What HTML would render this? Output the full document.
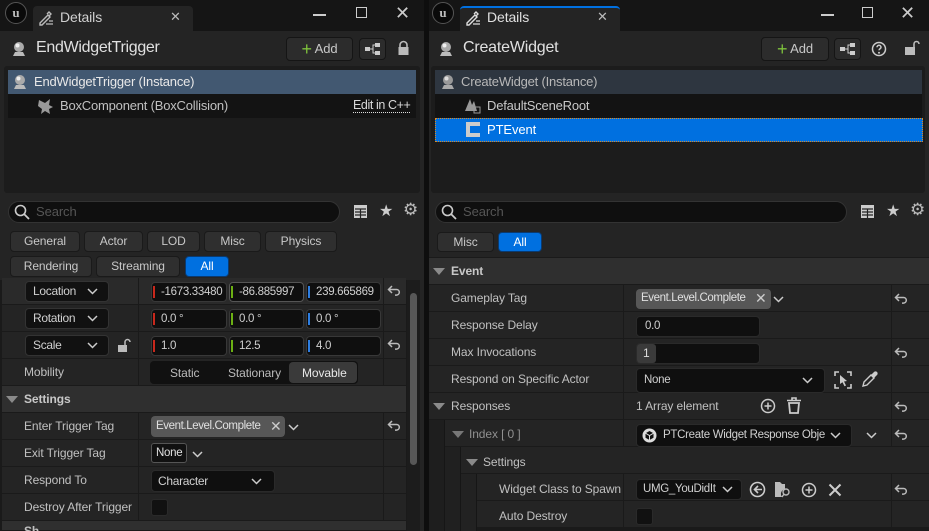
<!DOCTYPE html>
<html><head><meta charset="utf-8"><style>
*{margin:0;padding:0;box-sizing:border-box}
html{width:929px;height:531px;overflow:hidden}
body{width:929px;height:531px;background:#0e0e0e;overflow:hidden;position:relative;font-family:"Liberation Sans",sans-serif;font-size:12px;color:#c0c0c0;letter-spacing:-0.1px}
.a{position:absolute}
.t{position:absolute;white-space:nowrap}
.btn{position:absolute;background:#383838;border:1px solid #1a1a1a;border-radius:4px;color:#c8c8c8;text-align:center;font-size:12px}
.row{position:absolute;background:#242424;border-bottom:1px solid #1a1a1a}
.cat{position:absolute;background:#2f2f2f;border-bottom:1px solid #1a1a1a}
.fld{position:absolute;background:#0f0f0f;border:1px solid #383838;border-radius:4px;color:#d0d0d0;padding-left:6px;line-height:18px;overflow:hidden;white-space:nowrap;font-size:11.5px;letter-spacing:-0.3px}
.vl{position:absolute;width:1px;background:#1a1a1a}
.tri{position:absolute;width:0;height:0;border-left:6px solid transparent;border-right:6px solid transparent;border-top:7px solid #8a8a8a}
.chip{position:absolute;background:#575757;border-radius:4px;color:#e0e0e0;padding-left:5px;line-height:20px;font-size:11.5px;letter-spacing:-0.4px;white-space:nowrap;overflow:hidden}
</style></head><body>

<!-- ================= LEFT PANEL ================= -->
<div class="a" style="left:0;top:0;width:424px;height:531px;background:#242424"></div>
<div class="a" style="left:0;top:0;width:424px;height:31px;background:#151515"></div>
<div class="a" style="left:5px;top:2px;width:22px;height:22px;border-radius:50%;background:#0a0a0a;border:1px solid #555;color:#bbb;font:bold 13px 'Liberation Serif',serif;text-align:center;line-height:20px">u</div>
<div class="a" style="left:33px;top:6px;width:160px;height:25px;background:#242424;border-radius:4px 4px 0 0"></div>
<svg class="a" style="left:38px;top:10px" width="16" height="16"><path d="M2 13l8-8 2 2-8 8H2z M9 4l2-2 2 2-2 2" stroke="#bbb" fill="none" stroke-width="1.4"/><path d="M8 14h7M11 11h4" stroke="#bbb" stroke-width="1.2"/></svg>
<div class="t" style="left:60px;top:9px;font-size:14px;color:#d0d0d0">Details</div>
<div class="t" style="left:170px;top:9px;font-size:13px;color:#bbb">✕</div>
<div class="a" style="left:313px;top:14px;width:13px;height:1.5px;background:#ccc"></div>
<div class="a" style="left:356px;top:7px;width:11px;height:11px;border:1.5px solid #ccc"></div>
<div class="t" style="left:395px;top:3px;font-size:18px;color:#ccc">✕</div>

<svg class="a" style="left:10px;top:40px" width="18" height="18"><circle cx="9" cy="7" r="5" fill="#aaa"/><circle cx="7.5" cy="5.5" r="2" fill="#eee"/><path d="M3 16h12l-2-4H5z" fill="#bbb"/></svg>
<div class="t" style="left:36px;top:39px;font-size:16px;color:#e0e0e0;letter-spacing:-0.3px">EndWidgetTrigger</div>
<div class="btn" style="left:286px;top:37px;width:67px;height:24px;background:#2c2c2c;border-color:#151515;line-height:22px;font-size:13px"><span style="color:#7ec23c;font-size:18px;vertical-align:-2px">+</span> Add</div>
<div class="btn" style="left:359px;top:38px;width:27px;height:22px;background:#2c2c2c;border-color:#151515"></div>
<svg class="a" style="left:364px;top:43px" width="17" height="12"><rect x="1" y="4" width="5" height="4" fill="#ccc"/><rect x="11" y="0" width="5" height="4" fill="#ccc"/><rect x="11" y="8" width="5" height="4" fill="#ccc"/><path d="M6 6h3V2h2M9 6v4h2" stroke="#ccc" fill="none"/></svg>
<svg class="a" style="left:397px;top:40px" width="13" height="16"><path d="M3 7V5a3.5 3.5 0 017 0v2" stroke="#bbb" fill="none" stroke-width="1.6"/><rect x="1.5" y="7" width="10" height="8" fill="#bbb"/></svg>

<div class="a" style="left:4px;top:66px;width:416px;height:127px;background:#1c1c1c;border-radius:3px"></div>
<div class="a" style="left:8px;top:70px;width:408px;height:24px;background:#425871"></div>
<svg class="a" style="left:11px;top:73px" width="18" height="18"><circle cx="9" cy="7" r="5" fill="#aaa"/><circle cx="7.5" cy="5.5" r="2" fill="#eee"/><path d="M3 16h12l-2-4H5z" fill="#bbb"/></svg>
<div class="t" style="left:34px;top:74px;font-size:13px;color:#e8e8e8;letter-spacing:-0.2px">EndWidgetTrigger (Instance)</div>
<div class="a" style="left:8px;top:94px;width:408px;height:24px;background:#131313"></div>
<svg class="a" style="left:37px;top:97px" width="17" height="17"><path d="M2 3l6 3 5-4-1 6 4 2-4 2 1 5-5-3-4 3 1-5-4-3z" fill="#999"/></svg>
<div class="t" style="left:60px;top:98px;font-size:13px;color:#c0c0c0;letter-spacing:-0.2px">BoxComponent (BoxCollision)</div>
<div class="t" style="left:353px;top:98px;font-size:12.5px;color:#d8d8d8;border-bottom:1px dotted #ddd;line-height:14px;letter-spacing:-0.4px">Edit in C++</div>

<div class="a" style="left:8px;top:201px;width:332px;height:22px;background:#0f0f0f;border:1px solid #333;border-radius:11px"></div>
<svg class="a" style="left:14px;top:204px" width="16" height="16"><circle cx="6.5" cy="6.5" r="5" stroke="#ccc" fill="none" stroke-width="1.6"/><path d="M10 10l5 5" stroke="#ccc" stroke-width="1.8"/></svg>
<div class="t" style="left:36px;top:204px;font-size:13px;color:#555">Search</div>
<svg class="a" style="left:353px;top:204px" width="15" height="15"><rect x="1" y="1" width="13" height="13" fill="#ccc"/><path d="M2 5h11M2 8h11M2 11h11M7.5 5v9" stroke="#242424" stroke-width="1.2"/></svg>
<div class="t" style="left:379px;top:201px;font-size:16px;color:#ccc">★</div>
<div class="t" style="left:403px;top:200px;font-size:17px;color:#bbb">⚙</div>

<div class="btn" style="left:10px;top:231px;width:70px;height:21px;line-height:19px;background:#2f2f2f">General</div>
<div class="btn" style="left:84px;top:231px;width:59px;height:21px;line-height:19px;background:#2f2f2f">Actor</div>
<div class="btn" style="left:147px;top:231px;width:53px;height:21px;line-height:19px;background:#2f2f2f">LOD</div>
<div class="btn" style="left:204px;top:231px;width:57px;height:21px;line-height:19px;background:#2f2f2f">Misc</div>
<div class="btn" style="left:265px;top:231px;width:72px;height:21px;line-height:19px;background:#2f2f2f">Physics</div>
<div class="btn" style="left:10px;top:256px;width:82px;height:21px;line-height:19px;background:#2f2f2f">Rendering</div>
<div class="btn" style="left:96px;top:256px;width:84px;height:21px;line-height:19px;background:#2f2f2f">Streaming</div>
<div class="btn" style="left:185px;top:256px;width:44px;height:21px;line-height:19px;background:#0070e0;color:#fff;border-color:#0a3a70">All</div>

<div class="a" style="left:0;top:280px;width:407px;height:251px;background:#1a1a1a"></div>
<div class="row" style="left:2px;top:278px;width:404px;height:27px;background:#2a2a2a"></div>
<div class="row" style="left:2px;top:305px;width:404px;height:27px"></div>
<div class="row" style="left:2px;top:332px;width:404px;height:27px"></div>
<div class="row" style="left:2px;top:359px;width:404px;height:27px"></div>
<div class="cat" style="left:2px;top:386px;width:404px;height:27px"></div>
<div class="row" style="left:2px;top:413px;width:404px;height:27px"></div>
<div class="row" style="left:2px;top:440px;width:404px;height:27px"></div>
<div class="row" style="left:2px;top:467px;width:404px;height:27px"></div>
<div class="row" style="left:2px;top:494px;width:404px;height:27px"></div>
<div class="cat" style="left:2px;top:521px;width:404px;height:10px"></div>
<div class="vl" style="left:138px;top:278px;height:108px"></div>
<div class="vl" style="left:138px;top:413px;height:108px"></div>
<div class="vl" style="left:383px;top:278px;height:108px"></div>
<div class="vl" style="left:383px;top:413px;height:108px"></div>
<div class="a" style="left:407px;top:280px;width:13px;height:251px;background:#1c1c1c"></div>
<div class="a" style="left:410px;top:293px;width:7px;height:172px;background:#575757;border-radius:4px"></div>

<div class="fld" style="left:25px;top:281px;width:84px;height:21px;background:#111;border-color:#333;padding-left:7px;line-height:19px;font-size:12px">Location</div>
<div class="fld" style="left:25px;top:308px;width:84px;height:21px;background:#111;border-color:#333;padding-left:7px;line-height:19px;font-size:12px">Rotation</div>
<div class="fld" style="left:25px;top:335px;width:84px;height:21px;background:#111;border-color:#333;padding-left:7px;line-height:19px;font-size:12px">Scale</div>
<svg class="a" style="left:87px;top:288px" width="11" height="7"><path d="M1 1l4.5 4.5L10 1" stroke="#ccc" fill="none" stroke-width="1.5"/></svg>
<svg class="a" style="left:87px;top:315px" width="11" height="7"><path d="M1 1l4.5 4.5L10 1" stroke="#ccc" fill="none" stroke-width="1.5"/></svg>
<svg class="a" style="left:87px;top:342px" width="11" height="7"><path d="M1 1l4.5 4.5L10 1" stroke="#ccc" fill="none" stroke-width="1.5"/></svg>
<svg class="a" style="left:117px;top:338px" width="14" height="15"><path d="M8 7V4a2.5 2.5 0 015 0" stroke="#bbb" fill="none" stroke-width="1.5"/><rect x="1" y="7" width="9" height="7" fill="#bbb"/></svg>

<div class="fld" style="left:151px;top:282px;width:76px;height:20px;padding-left:9px">-1673.33480</div>
<div class="fld" style="left:229px;top:282px;width:75px;height:20px;padding-left:9px;border-color:#555">-86.885997</div>
<div class="fld" style="left:306px;top:282px;width:75px;height:20px;padding-left:9px">239.665869</div>
<div class="fld" style="left:151px;top:309px;width:76px;height:20px;padding-left:9px">0.0 °</div>
<div class="fld" style="left:229px;top:309px;width:75px;height:20px;padding-left:9px">0.0 °</div>
<div class="fld" style="left:306px;top:309px;width:75px;height:20px;padding-left:9px">0.0 °</div>
<div class="fld" style="left:151px;top:336px;width:76px;height:20px;padding-left:9px">1.0</div>
<div class="fld" style="left:229px;top:336px;width:75px;height:20px;padding-left:9px">12.5</div>
<div class="fld" style="left:306px;top:336px;width:75px;height:20px;padding-left:9px">4.0</div>
<div class="a" style="left:153px;top:286px;width:2px;height:12px;background:#c8281c"></div>
<div class="a" style="left:231px;top:286px;width:2px;height:12px;background:#6cb014"></div>
<div class="a" style="left:308px;top:286px;width:2px;height:12px;background:#2d7de0"></div>
<div class="a" style="left:153px;top:313px;width:2px;height:12px;background:#c8281c"></div>
<div class="a" style="left:231px;top:313px;width:2px;height:12px;background:#6cb014"></div>
<div class="a" style="left:308px;top:313px;width:2px;height:12px;background:#2d7de0"></div>
<div class="a" style="left:153px;top:340px;width:2px;height:12px;background:#c8281c"></div>
<div class="a" style="left:231px;top:340px;width:2px;height:12px;background:#6cb014"></div>
<div class="a" style="left:308px;top:340px;width:2px;height:12px;background:#2d7de0"></div>

<svg class="a" style="left:387px;top:285px" width="14" height="12"><path d="M5 1L1.5 4.5 5 8M2 4.5h7.5a2.8 2.8 0 010 5.6H8" stroke="#bbb" fill="none" stroke-width="1.5"/></svg>
<svg class="a" style="left:387px;top:339px" width="14" height="12"><path d="M5 1L1.5 4.5 5 8M2 4.5h7.5a2.8 2.8 0 010 5.6H8" stroke="#bbb" fill="none" stroke-width="1.5"/></svg>
<svg class="a" style="left:387px;top:420px" width="14" height="12"><path d="M5 1L1.5 4.5 5 8M2 4.5h7.5a2.8 2.8 0 010 5.6H8" stroke="#bbb" fill="none" stroke-width="1.5"/></svg>

<div class="t" style="left:24px;top:365px">Mobility</div>
<div class="a" style="left:150px;top:361px;width:208px;height:23px;background:#111;border-radius:4px"></div>
<div class="a" style="left:289px;top:362px;width:68px;height:21px;background:#3a3a3a;border-radius:4px"></div>
<div class="t" style="left:170px;top:366px;color:#bbb">Static</div>
<div class="t" style="left:228px;top:366px;color:#bbb">Stationary</div>
<div class="t" style="left:302px;top:366px;color:#e8e8e8">Movable</div>

<div class="tri" style="left:6px;top:396px"></div>
<div class="t" style="left:24px;top:392px;font-weight:bold;color:#c8c8c8">Settings</div>

<div class="t" style="left:24px;top:419px">Enter Trigger Tag</div>
<div class="chip" style="left:151px;top:416px;width:134px;height:21px">Event.Level.Complete</div>
<div class="a" style="left:266px;top:417px;width:18px;height:19px;background:#575757"></div>
<div class="t" style="left:270px;top:418px;font-size:14px;color:#ccc">✕</div>
<svg class="a" style="left:288px;top:424px" width="11" height="7"><path d="M1 1l4.5 4.5L10 1" stroke="#ccc" fill="none" stroke-width="1.5"/></svg>

<div class="t" style="left:24px;top:446px">Exit Trigger Tag</div>
<div class="a" style="left:151px;top:443px;width:36px;height:20px;border:1px solid #555;border-radius:3px;background:#111;color:#e0e0e0;padding-left:4px;line-height:18px;font-size:11.5px;letter-spacing:-0.3px">None</div>
<svg class="a" style="left:192px;top:451px" width="11" height="7"><path d="M1 1l4.5 4.5L10 1" stroke="#ccc" fill="none" stroke-width="1.5"/></svg>

<div class="t" style="left:24px;top:473px">Respond To</div>
<div class="fld" style="left:151px;top:470px;width:124px;height:22px;line-height:20px;border-color:#2a2a2a;font-size:12px">Character</div>
<svg class="a" style="left:251px;top:478px" width="11" height="7"><path d="M1 1l4.5 4.5L10 1" stroke="#ccc" fill="none" stroke-width="1.5"/></svg>

<div class="t" style="left:24px;top:500px">Destroy After Trigger</div>
<div class="a" style="left:151px;top:499px;width:17px;height:17px;background:#111;border:1px solid #2a2a2a;border-radius:3px"></div>
<div class="t" style="left:24px;top:524px;font-weight:bold;line-height:14px">Sh</div>

<!-- ================= RIGHT PANEL ================= -->
<div class="a" style="left:429px;top:0;width:500px;height:531px;background:#242424"></div>
<div class="a" style="left:429px;top:0;width:500px;height:31px;background:#151515"></div>
<div class="a" style="left:432px;top:2px;width:22px;height:22px;border-radius:50%;background:#0a0a0a;border:1px solid #555;color:#bbb;font:bold 13px 'Liberation Serif',serif;text-align:center;line-height:20px">u</div>
<div class="a" style="left:460px;top:6px;width:160px;height:25px;background:#242424;border-radius:4px 4px 0 0;border-top:2px solid #0070e0"></div>
<svg class="a" style="left:465px;top:10px" width="16" height="16"><path d="M2 13l8-8 2 2-8 8H2z M9 4l2-2 2 2-2 2" stroke="#ddd" fill="none" stroke-width="1.4"/><path d="M8 14h7M11 11h4" stroke="#ddd" stroke-width="1.2"/></svg>
<div class="t" style="left:487px;top:9px;font-size:14px;color:#e0e0e0">Details</div>
<div class="t" style="left:597px;top:9px;font-size:13px;color:#bbb">✕</div>
<div class="a" style="left:821px;top:14px;width:13px;height:1.5px;background:#ccc"></div>
<div class="a" style="left:862px;top:7px;width:11px;height:11px;border:1.5px solid #ccc"></div>
<div class="t" style="left:900px;top:3px;font-size:18px;color:#ccc">✕</div>

<svg class="a" style="left:437px;top:40px" width="18" height="18"><circle cx="9" cy="7" r="5" fill="#aaa"/><circle cx="7.5" cy="5.5" r="2" fill="#eee"/><path d="M3 16h12l-2-4H5z" fill="#bbb"/></svg>
<div class="t" style="left:463px;top:39px;font-size:16px;color:#e0e0e0;letter-spacing:-0.2px">CreateWidget</div>
<div class="btn" style="left:761px;top:37px;width:68px;height:24px;background:#2c2c2c;border-color:#151515;line-height:22px;font-size:13px"><span style="color:#7ec23c;font-size:18px;vertical-align:-2px">+</span> Add</div>
<div class="btn" style="left:834px;top:38px;width:27px;height:22px;background:#2c2c2c;border-color:#151515"></div>
<svg class="a" style="left:839px;top:43px" width="17" height="12"><rect x="1" y="4" width="5" height="4" fill="#ccc"/><rect x="11" y="0" width="5" height="4" fill="#ccc"/><rect x="11" y="8" width="5" height="4" fill="#ccc"/><path d="M6 6h3V2h2M9 6v4h2" stroke="#ccc" fill="none"/></svg>
<svg class="a" style="left:871px;top:41px" width="16" height="16"><circle cx="8" cy="8" r="6.5" stroke="#ccc" fill="none" stroke-width="1.5"/><path d="M6 6.3a2 2 0 114 0c0 1.4-2 1.5-2 3" stroke="#ccc" fill="none" stroke-width="1.5"/><circle cx="8" cy="11.8" r="1" fill="#ccc"/></svg>
<svg class="a" style="left:904px;top:40px" width="16" height="16"><path d="M10 7V4a2.5 2.5 0 015 0" stroke="#bbb" fill="none" stroke-width="1.6"/><rect x="1" y="7" width="10" height="8" fill="#bbb"/></svg>

<div class="a" style="left:431px;top:66px;width:494px;height:127px;background:#1c1c1c;border-radius:3px"></div>
<div class="a" style="left:435px;top:70px;width:487px;height:24px;background:#2e3640"></div>
<svg class="a" style="left:439px;top:73px" width="18" height="18"><circle cx="9" cy="7" r="5" fill="#999"/><circle cx="7.5" cy="5.5" r="2" fill="#ddd"/><path d="M3 16h12l-2-4H5z" fill="#aaa"/></svg>
<div class="t" style="left:461px;top:74px;font-size:13px;color:#b8b8b8;letter-spacing:-0.2px">CreateWidget (Instance)</div>
<div class="a" style="left:435px;top:94px;width:487px;height:24px;background:#131313"></div>
<svg class="a" style="left:464px;top:97px" width="18" height="18"><path d="M1 14l5-12 2 6 2-4 3 10z" fill="#999"/><rect x="10" y="10" width="6" height="6" stroke="#999" fill="none"/></svg>
<div class="t" style="left:487px;top:98px;font-size:13px;color:#c8c8c8;letter-spacing:-0.2px">DefaultSceneRoot</div>
<div class="a" style="left:435px;top:118px;width:488px;height:24px;background:#0070e0;border:1px dotted #e08a20"></div>
<div class="a" style="left:466px;top:122px;width:14px;height:15px;background:#ccc"></div>
<div class="a" style="left:470px;top:126px;width:10px;height:7px;background:#0070e0"></div>
<div class="t" style="left:487px;top:122px;font-size:13px;color:#fff">PTEvent</div>

<div class="a" style="left:435px;top:201px;width:412px;height:22px;background:#0f0f0f;border:1px solid #333;border-radius:11px"></div>
<svg class="a" style="left:441px;top:204px" width="16" height="16"><circle cx="6.5" cy="6.5" r="5" stroke="#ccc" fill="none" stroke-width="1.6"/><path d="M10 10l5 5" stroke="#ccc" stroke-width="1.8"/></svg>
<div class="t" style="left:463px;top:204px;font-size:13px;color:#555">Search</div>
<svg class="a" style="left:860px;top:204px" width="15" height="15"><rect x="1" y="1" width="13" height="13" fill="#ccc"/><path d="M2 5h11M2 8h11M2 11h11M7.5 5v9" stroke="#242424" stroke-width="1.2"/></svg>
<div class="t" style="left:886px;top:201px;font-size:16px;color:#ccc">★</div>
<div class="t" style="left:910px;top:200px;font-size:17px;color:#bbb">⚙</div>

<div class="btn" style="left:437px;top:232px;width:57px;height:20px;line-height:18px;background:#2f2f2f">Misc</div>
<div class="btn" style="left:498px;top:232px;width:44px;height:20px;line-height:18px;background:#0070e0;color:#fff;border-color:#0a3a70">All</div>

<div class="a" style="left:429px;top:257px;width:500px;height:274px;background:#1a1a1a"></div>
<div class="cat" style="left:429px;top:258px;width:500px;height:27px"></div>
<div class="row" style="left:429px;top:285px;width:500px;height:27px"></div>
<div class="row" style="left:429px;top:312px;width:500px;height:27px"></div>
<div class="row" style="left:429px;top:339px;width:500px;height:27px"></div>
<div class="row" style="left:429px;top:366px;width:500px;height:27px"></div>
<div class="row" style="left:429px;top:393px;width:500px;height:27px"></div>
<div class="row" style="left:445px;top:420px;width:484px;height:27px"></div>
<div class="row" style="left:461px;top:447px;width:468px;height:27px"></div>
<div class="row" style="left:477px;top:474px;width:452px;height:27px"></div>
<div class="row" style="left:477px;top:501px;width:452px;height:27px"></div>
<div class="a" style="left:429px;top:420px;width:16px;height:111px;background:#1e1e1e;border-right:1px solid #161616"></div>
<div class="a" style="left:445px;top:447px;width:16px;height:84px;background:#202020;border-right:1px solid #161616"></div>
<div class="a" style="left:461px;top:474px;width:16px;height:57px;background:#222;border-right:1px solid #161616"></div>
<div class="vl" style="left:623px;top:285px;height:162px"></div>
<div class="vl" style="left:623px;top:474px;height:57px"></div>
<div class="vl" style="left:891px;top:285px;height:162px"></div>
<div class="vl" style="left:891px;top:474px;height:57px"></div>

<div class="tri" style="left:433px;top:268px"></div>
<div class="t" style="left:451px;top:264px;font-weight:bold;color:#c8c8c8">Event</div>

<div class="t" style="left:451px;top:291px">Gameplay Tag</div>
<div class="chip" style="left:636px;top:289px;width:135px;height:20px;line-height:19px">Event.Level.Complete</div>
<div class="a" style="left:752px;top:290px;width:18px;height:18px;background:#575757"></div>
<div class="t" style="left:755px;top:290px;font-size:14px;color:#ccc">✕</div>
<svg class="a" style="left:773px;top:296px" width="11" height="7"><path d="M1 1l4.5 4.5L10 1" stroke="#ccc" fill="none" stroke-width="1.5"/></svg>

<div class="t" style="left:451px;top:318px">Response Delay</div>
<div class="fld" style="left:636px;top:316px;width:124px;height:21px;line-height:19px;border-color:#2a2a2a;padding-left:8px">0.0</div>

<div class="t" style="left:451px;top:345px">Max Invocations</div>
<div class="fld" style="left:636px;top:343px;width:124px;height:21px;border-color:#2a2a2a"></div>
<div class="a" style="left:637px;top:344px;width:19px;height:19px;background:#3a3a3a;border-radius:3px;color:#ddd;padding-left:6px;line-height:19px">1</div>

<div class="t" style="left:451px;top:372px">Respond on Specific Actor</div>
<div class="fld" style="left:636px;top:368px;width:189px;height:25px;line-height:23px;border-color:#2a2a2a;padding-left:7px">None</div>
<svg class="a" style="left:802px;top:377px" width="11" height="7"><path d="M1 1l4.5 4.5L10 1" stroke="#ccc" fill="none" stroke-width="1.5"/></svg>
<svg class="a" style="left:834px;top:371px" width="18" height="18"><path d="M1 5V1h4M13 1h4v4M17 13v4h-4M5 17H1v-4" stroke="#ccc" fill="none" stroke-width="1.6"/><path d="M6 4l7 6-3 .5 2 4-1.5.7-2-4L6 13z" fill="#ccc"/></svg>
<svg class="a" style="left:861px;top:370px" width="18" height="18"><path d="M2 16l1-4 7-7 3 3-7 7z" stroke="#ccc" fill="none" stroke-width="1.4"/><path d="M10 5l3-3a2 2 0 013 3l-3 3z" fill="#ccc"/></svg>

<div class="tri" style="left:433px;top:403px"></div>
<div class="t" style="left:451px;top:399px">Responses</div>
<div class="t" style="left:636px;top:399px">1 Array element</div>
<svg class="a" style="left:760px;top:398px" width="16" height="16"><circle cx="8" cy="8" r="6.5" stroke="#ccc" fill="none" stroke-width="1.5"/><path d="M8 4.5v7M4.5 8h7" stroke="#ccc" stroke-width="1.5"/></svg>
<svg class="a" style="left:786px;top:397px" width="16" height="17"><path d="M1 3.5h14M6 3V1h4v2" stroke="#ccc" fill="none" stroke-width="1.6"/><path d="M3 6h10l-1 10H4z" stroke="#ccc" fill="none" stroke-width="1.8"/></svg>

<div class="tri" style="left:452px;top:431px;border-top-color:#777"></div>
<div class="t" style="left:469px;top:427px;color:#909090">Index [ 0 ]</div>
<div class="fld" style="left:636px;top:424px;width:216px;height:23px;line-height:21px;border-color:#2a2a2a;padding-left:26px;padding-right:18px">PTCreate Widget Response Obje</div>
<svg class="a" style="left:642px;top:428px" width="15" height="15"><circle cx="7.5" cy="7.5" r="7" fill="#ddd"/><path d="M7.5 3l4 2.2v4.6l-4 2.2-4-2.2V5.2z" fill="#111"/><path d="M3.5 5.2l4 2.3 4-2.3M7.5 7.5V12" stroke="#ddd" stroke-width="1"/></svg>
<svg class="a" style="left:830px;top:432px" width="11" height="7"><path d="M1 1l4.5 4.5L10 1" stroke="#ccc" fill="none" stroke-width="1.5"/></svg>
<svg class="a" style="left:866px;top:432px" width="11" height="7"><path d="M1 1l4.5 4.5L10 1" stroke="#ccc" fill="none" stroke-width="1.5"/></svg>

<div class="tri" style="left:466px;top:459px"></div>
<div class="t" style="left:483px;top:455px">Settings</div>

<div class="t" style="left:499px;top:482px">Widget Class to Spawn</div>
<div class="fld" style="left:636px;top:479px;width:106px;height:21px;line-height:19px;border-color:#2a2a2a;padding-right:20px">UMG_YouDidIt</div>
<svg class="a" style="left:722px;top:486px" width="11" height="7"><path d="M1 1l4.5 4.5L10 1" stroke="#ccc" fill="none" stroke-width="1.5"/></svg>
<svg class="a" style="left:749px;top:481px" width="17" height="17"><circle cx="8.5" cy="8.5" r="7" stroke="#ccc" fill="none" stroke-width="1.6"/><path d="M9 5l-3.5 3.5L9 12M6 8.5h7" stroke="#ccc" fill="none" stroke-width="1.6"/></svg>
<svg class="a" style="left:774px;top:480px" width="17" height="18"><path d="M1 2h5l2 2h3v5a5 5 0 00-3 8H1z" fill="#bbb"/><circle cx="12" cy="12" r="3" stroke="#bbb" fill="none" stroke-width="1.4"/><path d="M10 14l-2 3" stroke="#bbb" stroke-width="1.4"/></svg>
<svg class="a" style="left:801px;top:482px" width="16" height="16"><circle cx="8" cy="8" r="6.5" stroke="#ccc" fill="none" stroke-width="1.5"/><path d="M8 4.5v7M4.5 8h7" stroke="#ccc" stroke-width="1.5"/></svg>
<svg class="a" style="left:828px;top:483px" width="14" height="14"><path d="M1.5 1.5l11 11M12.5 1.5l-11 11" stroke="#ccc" stroke-width="2"/></svg>

<div class="t" style="left:499px;top:509px">Auto Destroy</div>
<div class="a" style="left:636px;top:508px;width:17px;height:17px;background:#111;border:1px solid #2a2a2a;border-radius:3px"></div>

<svg class="a" style="left:894px;top:293px" width="14" height="12"><path d="M5 1L1.5 4.5 5 8M2 4.5h7.5a2.8 2.8 0 010 5.6H8" stroke="#bbb" fill="none" stroke-width="1.5"/></svg>
<svg class="a" style="left:894px;top:347px" width="14" height="12"><path d="M5 1L1.5 4.5 5 8M2 4.5h7.5a2.8 2.8 0 010 5.6H8" stroke="#bbb" fill="none" stroke-width="1.5"/></svg>
<svg class="a" style="left:894px;top:401px" width="14" height="12"><path d="M5 1L1.5 4.5 5 8M2 4.5h7.5a2.8 2.8 0 010 5.6H8" stroke="#bbb" fill="none" stroke-width="1.5"/></svg>
<svg class="a" style="left:894px;top:429px" width="14" height="12"><path d="M5 1L1.5 4.5 5 8M2 4.5h7.5a2.8 2.8 0 010 5.6H8" stroke="#bbb" fill="none" stroke-width="1.5"/></svg>
<svg class="a" style="left:894px;top:484px" width="14" height="12"><path d="M5 1L1.5 4.5 5 8M2 4.5h7.5a2.8 2.8 0 010 5.6H8" stroke="#bbb" fill="none" stroke-width="1.5"/></svg>

</body></html>
